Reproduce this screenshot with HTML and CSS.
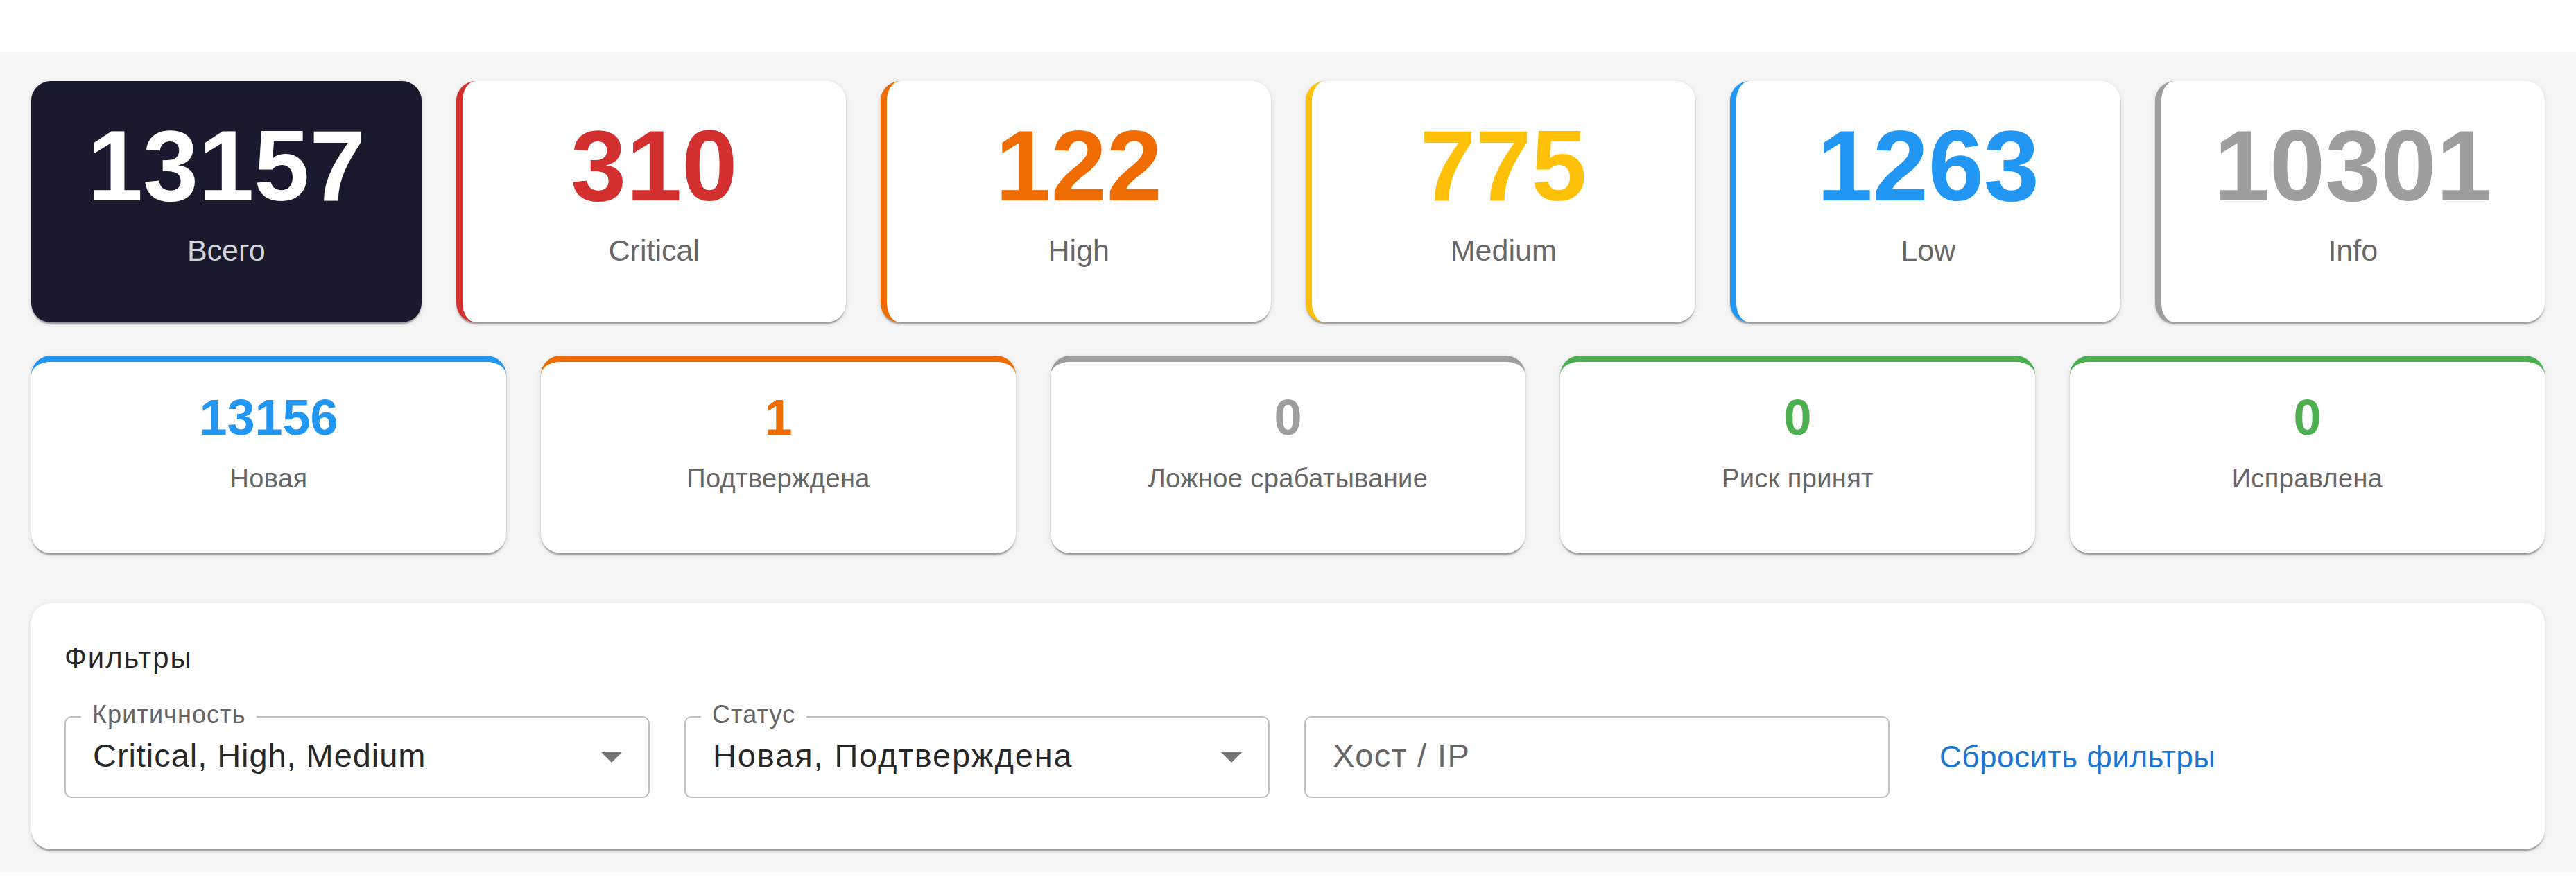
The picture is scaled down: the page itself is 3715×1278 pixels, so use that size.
FILE: index.html
```html
<!DOCTYPE html>
<html lang="ru">
<head>
<meta charset="utf-8">
<title>Уязвимости</title>
<link rel="stylesheet" href="styles.css">
</head>
<body>
<main class="page">
  <section class="sev-grid">
    <div class="sev-card sev-total"><div class="sev-num">13157</div><div class="sev-label">Всего</div></div>
    <div class="sev-card sev-critical"><div class="sev-num">310</div><div class="sev-label">Critical</div></div>
    <div class="sev-card sev-high"><div class="sev-num">122</div><div class="sev-label">High</div></div>
    <div class="sev-card sev-medium"><div class="sev-num">775</div><div class="sev-label">Medium</div></div>
    <div class="sev-card sev-low"><div class="sev-num">1263</div><div class="sev-label">Low</div></div>
    <div class="sev-card sev-info"><div class="sev-num">10301</div><div class="sev-label">Info</div></div>
  </section>

  <section class="status-grid">
    <div class="st-card st-new"><div class="st-num">13156</div><div class="st-label">Новая</div></div>
    <div class="st-card st-confirmed"><div class="st-num">1</div><div class="st-label">Подтверждена</div></div>
    <div class="st-card st-false"><div class="st-num">0</div><div class="st-label">Ложное срабатывание</div></div>
    <div class="st-card st-accepted"><div class="st-num">0</div><div class="st-label">Риск принят</div></div>
    <div class="st-card st-fixed"><div class="st-num">0</div><div class="st-label">Исправлена</div></div>
  </section>

  <section class="filters">
    <div class="filters-title">Фильтры</div>
    <div class="filters-row">
      <div class="field">
        <span class="field-label">Критичность</span>
        <span class="field-value">Critical, High, Medium</span>
        <svg class="field-arrow" viewBox="0 0 10 5" aria-hidden="true"><path d="M0 0L5 5L10 0Z"/></svg>
      </div>
      <div class="field">
        <span class="field-label">Статус</span>
        <span class="field-value field-value-ru">Новая, Подтверждена</span>
        <svg class="field-arrow" viewBox="0 0 10 5" aria-hidden="true"><path d="M0 0L5 5L10 0Z"/></svg>
      </div>
      <div class="field">
        <span class="field-placeholder">Хост / IP</span>
      </div>
      <a class="reset-link" href="#">Сбросить фильтры</a>
    </div>
  </section>
</main>
</body>
</html>
```

FILE: styles.css
```css
* { box-sizing: border-box; }

html, body {
  margin: 0;
  padding: 0;
  background: #ffffff;
  font-family: "Liberation Sans", Arial, Helvetica, sans-serif;
}

.page {
  margin-top: 75px;
  background: #f5f5f5;
  padding: 42px 45px 33px;
}

/* ---------- severity row ---------- */
.sev-grid {
  display: grid;
  grid-template-columns: repeat(6, 1fr);
  gap: 50px;
}

.sev-card {
  height: 348px;
  padding-top: 51px;
  background: #ffffff;
  border-radius: 28px;
  border-left: 9px solid transparent;
  box-shadow: 0 5px 2px -2px rgba(0,0,0,0.2), 0 2px 2px 0 rgba(0,0,0,0.14), 0 2px 7px 0 rgba(0,0,0,0.12);
  text-align: center;
}

.sev-num {
  font-size: 144px;
  line-height: 1;
  font-weight: 700;
}

.sev-label {
  margin-top: 24px;
  font-size: 43px;
  line-height: 1.2;
  color: #666666;
}

.sev-total {
  background: #1a1a2e;
  border-left: none;
}
.sev-total .sev-num { color: #ffffff; }
.sev-total .sev-label { color: rgba(255,255,255,0.82); }

.sev-critical { border-left-color: #d32f2f; }
.sev-critical .sev-num { color: #d32f2f; }
.sev-high { border-left-color: #ef6c00; }
.sev-high .sev-num { color: #ef6c00; }
.sev-medium { border-left-color: #ffc107; }
.sev-medium .sev-num { color: #ffc107; }
.sev-low { border-left-color: #2196f3; }
.sev-low .sev-num { color: #2196f3; }
.sev-info { border-left-color: #9e9e9e; }
.sev-info .sev-num { color: #9e9e9e; }

/* ---------- status row ---------- */
.status-grid {
  margin-top: 48px;
  display: grid;
  grid-template-columns: repeat(5, 1fr);
  gap: 50px;
}

.st-card {
  height: 285px;
  padding-top: 44px;
  background: #ffffff;
  border-radius: 28px;
  border-top: 9px solid transparent;
  box-shadow: 0 5px 2px -2px rgba(0,0,0,0.2), 0 2px 2px 0 rgba(0,0,0,0.14), 0 2px 7px 0 rgba(0,0,0,0.12);
  text-align: center;
}

.st-num {
  font-size: 72px;
  line-height: 1;
  font-weight: 700;
}

.st-label {
  margin-top: 30px;
  font-size: 38px;
  line-height: 1.2;
  letter-spacing: 0.01em;
  color: #666666;
}

.st-new { border-top-color: #2196f3; }
.st-new .st-num { color: #2196f3; }
.st-confirmed { border-top-color: #ef6c00; }
.st-confirmed .st-num { color: #ef6c00; }
.st-false { border-top-color: #9e9e9e; }
.st-false .st-num { color: #9e9e9e; }
.st-accepted { border-top-color: #4caf50; }
.st-accepted .st-num { color: #4caf50; }
.st-fixed { border-top-color: #4caf50; }
.st-fixed .st-num { color: #4caf50; }

/* ---------- filters ---------- */
.filters {
  margin-top: 72px;
  height: 355px;
  background: #ffffff;
  border-radius: 28px;
  padding: 47px 48px 0;
  box-shadow: 0 5px 2px -2px rgba(0,0,0,0.2), 0 2px 2px 0 rgba(0,0,0,0.14), 0 2px 7px 0 rgba(0,0,0,0.12);
}

.filters-title {
  font-size: 42px;
  line-height: 63px;
  letter-spacing: 0.045em;
  color: rgba(0,0,0,0.87);
}

.filters-row {
  margin-top: 53px;
  display: flex;
  align-items: center;
  gap: 50px;
}

.field {
  position: relative;
  width: 844px;
  height: 118px;
  border: 2px solid #c0c0c0;
  border-radius: 10px;
  display: flex;
  align-items: center;
  padding: 0 38px 3px 39px;
}

.field-label {
  position: absolute;
  top: -22px;
  left: 22px;
  padding: 0 16px;
  background: #ffffff;
  font-size: 36px;
  line-height: 36px;
  letter-spacing: 0.03em;
  color: #666666;
}

.field-value {
  font-size: 47px;
  line-height: 1.2;
  letter-spacing: 0.02em;
  color: rgba(0,0,0,0.87);
  white-space: nowrap;
}

.field-value-ru {
  letter-spacing: 0.04em;
}

.field-placeholder {
  font-size: 47px;
  line-height: 1.2;
  letter-spacing: 0.03em;
  color: #666666;
}

.field-arrow {
  margin-left: auto;
  width: 30px;
  height: 15px;
  margin-top: 4px;
  fill: #757575;
  flex: none;
}

.reset-link {
  padding: 0 22px;
  font-size: 44px;
  line-height: 1.2;
  letter-spacing: 0.012em;
  color: #1976d2;
  text-decoration: none;
  white-space: nowrap;
}
```
